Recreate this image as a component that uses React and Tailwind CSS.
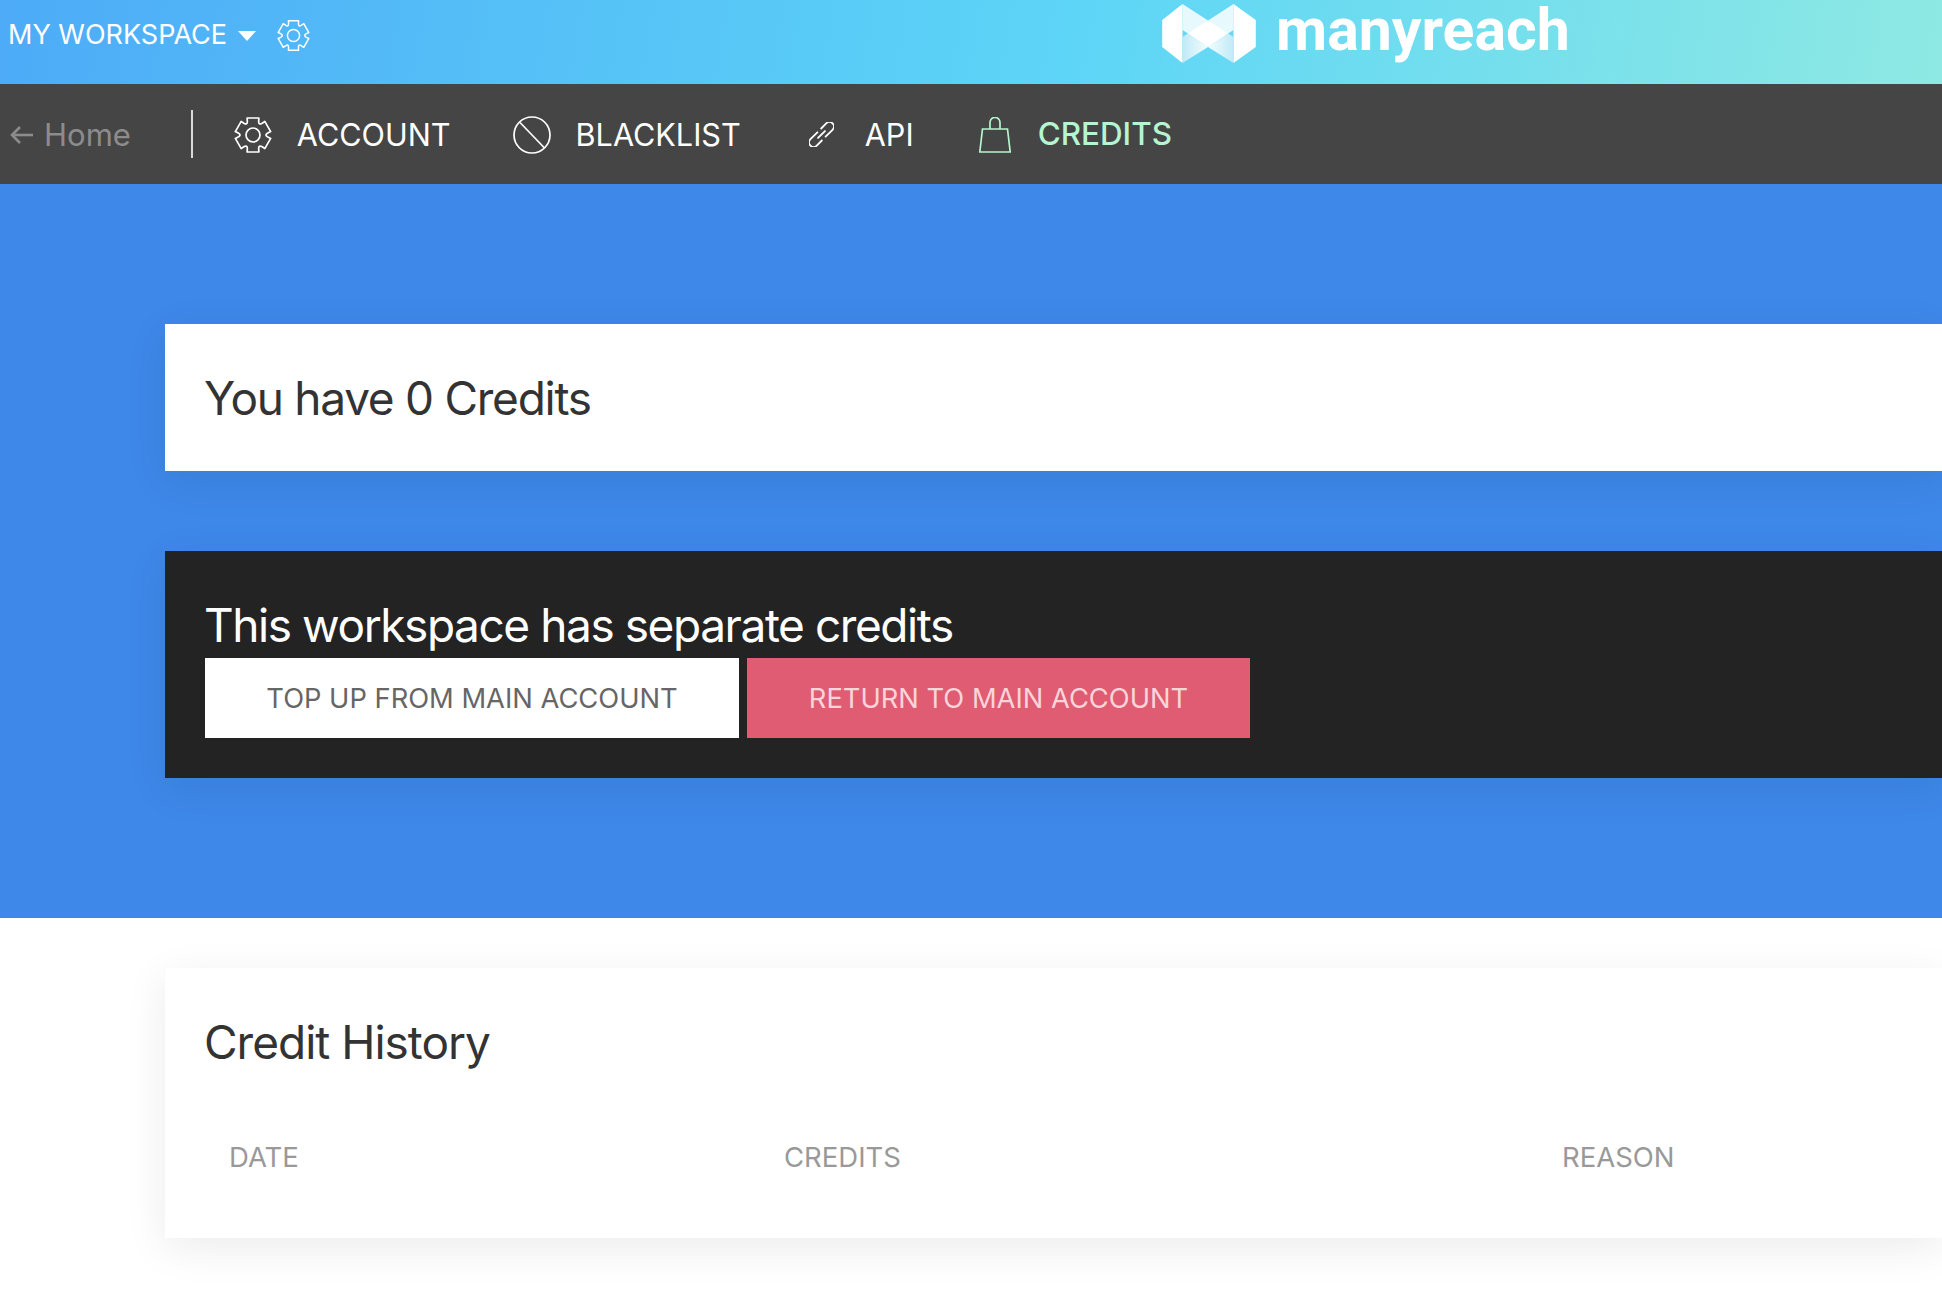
import React from 'react';

// six tooth gear outline, centred on 0,0 with an outer radius of 18
function gearPath() {
  const pt = (r, deg) => {
    const a = (deg * Math.PI) / 180;
    return `${(r * Math.cos(a)).toFixed(2)} ${(r * Math.sin(a)).toFixed(2)}`;
  };
  let d = '';
  for (let i = 0; i < 6; i++) {
    const a = -90 + i * 60;
    d += `${i === 0 ? 'M' : 'L'}${pt(18, a - 19)} L${pt(18, a + 19)} L${pt(14.5, a + 23)} Q${pt(11.5, a + 30)} ${pt(14.5, a + 37)} `;
  }
  return d + 'Z';
}

function GearIcon({ className }) {
  return (
    <svg viewBox="-19 -19 38 38" className={className} fill="none" stroke="currentColor" strokeWidth="1.7" strokeLinejoin="round">
      <path d={gearPath()} />
      <circle cx="0" cy="0" r="7" />
    </svg>
  );
}

function Logo() {
  return (
    <svg viewBox="12.7 4 93.6 59" className="w-[94px] h-[59px] shrink-0 mt-[4px]">
      <defs>
        <linearGradient id="lowerLeft" x1="0" y1="0" x2="1" y2="0">
          <stop offset="0" stopColor="#bfeaf7" />
          <stop offset="1" stopColor="#f5fcfe" />
        </linearGradient>
        <linearGradient id="lowerRight" x1="1" y1="0" x2="0" y2="0">
          <stop offset="0" stopColor="#bfeaf7" />
          <stop offset="1" stopColor="#f5fcfe" />
        </linearGradient>
      </defs>
      <path d="M12.7 20L33 4V63L12.7 47Z" fill="#fff" />
      <path d="M106.3 20L84 4V63L106.3 47Z" fill="#fff" />
      <path d="M33 4L58.5 20.5L84 4V30L78.6 33.5L58.5 47L38.4 33.5L33 30Z" fill="#fff" fillOpacity="0.85" />
      <path d="M38.4 33.5L58.5 20.5L78.6 33.5L58.5 47Z" fill="#fff" />
      <path d="M33 37L38.4 33.5L58.5 47L33 63Z" fill="url(#lowerLeft)" />
      <path d="M84 37L78.6 33.5L58.5 47L84 63Z" fill="url(#lowerRight)" />
    </svg>
  );
}

function BanIcon() {
  return (
    <svg viewBox="0 0 38 38" className="w-[38px] h-[38px]" fill="none" stroke="currentColor" strokeWidth="1.7">
      <circle cx="19" cy="19" r="18" />
      <path d="M7 6.5L31.5 32" />
    </svg>
  );
}

function LinkIcon() {
  return (
    <svg viewBox="0 0 28 28" className="w-[25px] h-[25px]" fill="none" stroke="currentColor" strokeWidth="2" strokeLinecap="round">
      <g transform="translate(14 14) rotate(-45) translate(-18.5 -6)">
        <path d="M17 1H6a5 5 0 0 0 0 10H14" />
        <path d="M20 11H31a5 5 0 0 0 0-10H23" />
        <path d="M13 6H24" />
      </g>
    </svg>
  );
}

function BagIcon() {
  return (
    <svg viewBox="0 0 32 36" className="w-[32px] h-[36px]" fill="none" stroke="currentColor" strokeWidth="1.7">
      <path d="M3.5 12H28.5L31.2 35H0.8Z" />
      <path d="M11 12V5.5a5 5 0 0 1 10 0V12" />
    </svg>
  );
}

function ArrowIcon() {
  return (
    <svg viewBox="0 0 23 18" className="w-[23px] h-[18px]" fill="none" stroke="#8c8c8c" strokeWidth="2.6">
      <path d="M23 9H2" />
      <path d="M10 1L2 9L10 17" />
    </svg>
  );
}

export default function App() {
  return (
    <div className="font-['Inter',sans-serif] w-[1942px] h-[1294px] overflow-hidden bg-white">
      <header className="h-[84px] bg-[linear-gradient(100deg,#4dabf7_0%,#5dd5f7_55%,#8ee9e3_100%)] flex items-start pl-[8px]">
        <div className="mt-[17px] h-[36px] flex items-center text-white">
          <span className="text-[27px]">MY WORKSPACE</span>
          <span className="ml-[11px] mt-[2px] w-0 h-0 border-x-[9.5px] border-x-transparent border-t-[10px] border-t-white"></span>
          <GearIcon className="ml-[21px] w-[33px] h-[33px]" />
        </div>
        <div className="flex items-start ml-[852px] gap-[20px]">
          <Logo />
          <span className="text-white text-[59px] leading-[60px] font-bold font-['Roboto',sans-serif]">manyreach</span>
        </div>
      </header>
      <nav className="h-[100px] bg-[#454545] flex items-center pl-[10px] pt-[2px] text-white text-[30.6px]">
        <ArrowIcon />
        <span className="ml-[11px] text-[31px] text-[#8c8c8c]">Home</span>
        <span className="ml-[60px] -mt-[2px] w-[2px] h-[48px] bg-white/80"></span>
        <div className="ml-[41px] flex items-center gap-[25px]">
          <GearIcon className="w-[38px] h-[38px]" />
          <span>ACCOUNT</span>
        </div>
        <div className="ml-[62px] flex items-center gap-[25px]">
          <BanIcon />
          <span>BLACKLIST</span>
        </div>
        <div className="ml-[68px] flex items-center gap-[31px]">
          <LinkIcon />
          <span>API</span>
        </div>
        <div className="ml-[65px] flex items-center gap-[27px] text-[#b5f5d0]">
          <BagIcon />
          <span className="font-medium text-[31.4px]">CREDITS</span>
        </div>
      </nav>
      <section className="bg-[#3e88e9] h-[734px] pl-[165px] pt-[140px] flex flex-col">
        <div className="bg-white h-[147px] flex items-center pl-[39px] pt-[2px] shadow-[0_10px_40px_rgba(0,0,0,0.08)]">
          <h2 className="text-[46px] tracking-[-1.27px] text-[#333]">You have 0 Credits</h2>
        </div>
        <div className="mt-[80px] bg-[#232323] h-[227px] pl-[40px] pt-[42px] shadow-[0_10px_40px_rgba(0,0,0,0.08)]">
          <h2 className="-ml-[1px] text-[46px] tracking-[-1.43px] text-white leading-[65px]">This workspace has separate credits</h2>
          <div className="flex gap-[8px]">
            <button className="bg-white text-[#666] text-[27.3px] h-[80px] w-[534px] pt-[2px]">TOP UP FROM MAIN ACCOUNT</button>
            <button className="bg-[#e05c72] text-[#f9d5da] text-[27.3px] h-[80px] w-[503px] pt-[2px]">RETURN TO MAIN ACCOUNT</button>
          </div>
        </div>
      </section>
      <section className="pl-[165px] pt-[50px]">
        <div className="h-[270px] shadow-[0_10px_40px_rgba(0,0,0,0.08)] pl-[40px] pt-[44px]">
          <h2 className="-ml-[1px] text-[46px] tracking-[-1px] leading-[60px] text-[#333]">Credit History</h2>
          <div className="mt-[68px] pl-[24px] grid grid-cols-[555px_778px_1fr] text-[27.5px] leading-[34px] text-[#999]">
            <span>DATE</span>
            <span>CREDITS</span>
            <span>REASON</span>
          </div>
        </div>
      </section>
    </div>
  );
}
